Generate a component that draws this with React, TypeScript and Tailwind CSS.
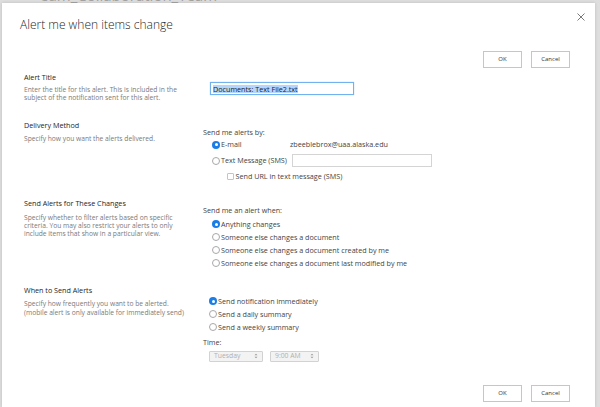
import React from "react";

function Radio({ checked }: { checked?: boolean }) {
  return checked ? (
    <span className="w-[8px] h-[8px] rounded-full bg-[#1a7ee6] flex items-center justify-center shrink-0">
      <span className="w-[3px] h-[3px] rounded-full bg-white" />
    </span>
  ) : (
    <span className="w-[8px] h-[8px] rounded-full border border-[#a8a8a8] bg-white shrink-0" />
  );
}

function Btn({ children }: { children: React.ReactNode }) {
  return (
    <div className="h-[17px] w-[39px] border border-[#c6c6c6] bg-white flex items-center justify-center text-[6px] text-[#333]">
      {children}
    </div>
  );
}

function Updown() {
  return (
    <svg width="4" height="6" viewBox="0 0 4 6" className="shrink-0">
      <path d="M0.5 2.3 L2 0.8 L3.5 2.3 Z" fill="#9a9a9a" />
      <path d="M0.5 3.7 L2 5.2 L3.5 3.7 Z" fill="#9a9a9a" />
    </svg>
  );
}

function Select({ w, text }: { w: string; text: string }) {
  return (
    <div className={`${w} h-[11px] border border-[#d2d2d2] bg-[#f3f3f3] rounded-[1px] flex items-center justify-between px-[4px] text-[6.8px] text-[#b0b0b0]`}>
      <span>{text}</span>
      <Updown />
    </div>
  );
}

export default function App() {
  return (
    <div className="w-[600px] h-[407px] bg-[#dedede] overflow-hidden flex flex-col font-['Segoe_UI','Open_Sans',sans-serif]">
      <div className="h-[3px] overflow-hidden pl-[40px] text-[#a3a3a3] text-[15px] leading-[15px] shrink-0">
        <div className="-mt-[12px]">eam_Collaboration_Team</div>
      </div>
      <div className="flex flex-1 min-h-0 pl-[2px] pr-[5px]">
        <div className="flex-1 bg-white flex flex-col shadow-[0_0_3px_rgba(0,0,0,0.15)]">
          {/* header */}
          <div className="flex justify-between items-start pl-[18px] pr-[10px]">
            <div className="mt-[14px] text-[12px] leading-[16px] text-[#262626] font-light">
              Alert me when items change
            </div>
            <svg width="8" height="8" viewBox="0 0 8 8" className="mt-[10px]">
              <path d="M0.5 0.5 L7.5 7.5 M7.5 0.5 L0.5 7.5" stroke="#6a6a6a" strokeWidth="0.9" />
            </svg>
          </div>
          {/* top buttons */}
          <div className="flex justify-end gap-[9px] pr-[25px] mt-[18px]">
            <Btn>OK</Btn>
            <Btn>Cancel</Btn>
          </div>

          {/* Section 1 */}
          <div className="flex pl-[22px] mt-[4.5px] h-[48px] shrink-0">
            <div className="w-[179px] whitespace-nowrap">
              <div className="text-[7.2px] leading-[9px] text-[#1e1e1e]">Alert Title</div>
              <div className="mt-[4px] text-[6.7px] leading-[8.6px] text-[#7a7a7a]">
                Enter the title for this alert. This is included in the
                <br />
                subject of the notification sent for this alert.
              </div>
            </div>
            <div className="pt-[9.5px] pl-[7px]">
              <div className="w-[144px] h-[13px] border border-[#72b2ee] shadow-[0_0_1px_#9cc9f3] flex items-center px-[2px]">
                <span className="bg-[#b4d5fe] text-[7.2px] leading-[8px] text-[#222]">Documents: Text File2.txt</span>
              </div>
            </div>
          </div>

          {/* Section 2 */}
          <div className="flex pl-[22px] h-[78px] shrink-0">
            <div className="w-[179px] whitespace-nowrap">
              <div className="text-[7.2px] leading-[9px] text-[#1e1e1e]">Delivery Method</div>
              <div className="mt-[5px] text-[6.7px] leading-[8.6px] text-[#7a7a7a]">
                Specify how you want the alerts delivered.
              </div>
            </div>
            <div className="pt-[7.7px] text-[7.2px] text-[#444] whitespace-nowrap">
              <div className="leading-[9px]">Send me alerts by:</div>
              <div className="mt-[1px] h-[13px] pl-[9px] flex items-center">
                <Radio checked />
                <span className="ml-[1px] w-[69px]">E-mail</span>
                <span>zbeeblebrox@uaa.alaska.edu</span>
              </div>
              <div className="mt-[3px] h-[13px] pl-[9px] flex items-center">
                <Radio />
                <span className="ml-[1px] w-[71px]">Text Message (SMS)</span>
                <span className="w-[140px] h-[13px] border border-[#d4d4d4]" />
              </div>
              <div className="mt-[3px] h-[13px] pl-[24px] flex items-center">
                <span className="w-[7px] h-[7px] border border-[#c4c4c4] rounded-[1px] shrink-0" />
                <span className="ml-[1.5px]">Send URL in text message (SMS)</span>
              </div>
            </div>
          </div>

          {/* Section 3 */}
          <div className="flex pl-[22px] h-[87px] shrink-0">
            <div className="w-[179px] whitespace-nowrap">
              <div className="text-[7.2px] leading-[9px] text-[#1e1e1e]">Send Alerts for These Changes</div>
              <div className="mt-[6px] text-[6.7px] leading-[8px] text-[#7a7a7a]">
                Specify whether to filter alerts based on specific
                <br />
                criteria. You may also restrict your alerts to only
                <br />
                include items that show in a particular view.
              </div>
            </div>
            <div className="pt-[7px] text-[7.2px] text-[#444] whitespace-nowrap">
              <div className="leading-[9px]">Send me an alert when:</div>
              <div className="mt-[3px] pl-[9px] flex flex-col">
                <div className="h-[13px] flex items-center">
                  <Radio checked />
                  <span className="ml-[1px]">Anything changes</span>
                </div>
                <div className="h-[13px] flex items-center">
                  <Radio />
                  <span className="ml-[1px]">Someone else changes a document</span>
                </div>
                <div className="h-[13px] flex items-center">
                  <Radio />
                  <span className="ml-[1px]">Someone else changes a document created by me</span>
                </div>
                <div className="h-[13px] flex items-center">
                  <Radio />
                  <span className="ml-[1px]">Someone else changes a document last modified by me</span>
                </div>
              </div>
            </div>
          </div>

          {/* Section 4 */}
          <div className="flex pl-[22px] shrink-0">
            <div className="w-[179px] whitespace-nowrap">
              <div className="text-[7.2px] leading-[9px] text-[#1e1e1e]">When to Send Alerts</div>
              <div className="mt-[4px] text-[6.7px] leading-[9px] text-[#7a7a7a]">
                Specify how frequently you want to be alerted.
                <br />
                (mobile alert is only available for immediately send)
              </div>
            </div>
            <div className="pt-[9px] text-[7.2px] text-[#444] whitespace-nowrap">
              <div className="pl-[6px] flex flex-col">
                <div className="h-[13px] flex items-center">
                  <Radio checked />
                  <span className="ml-[1px]">Send notification immediately</span>
                </div>
                <div className="h-[13px] flex items-center">
                  <Radio />
                  <span className="ml-[1px]">Send a daily summary</span>
                </div>
                <div className="h-[13px] flex items-center">
                  <Radio />
                  <span className="ml-[1px]">Send a weekly summary</span>
                </div>
              </div>
              <div className="mt-[4px] leading-[9px]">Time:</div>
              <div className="mt-[4px] pl-[6px] flex gap-[7px]">
                <Select w="w-[54px]" text="Tuesday" />
                <Select w="w-[49px]" text="9:00 AM" />
              </div>
            </div>
          </div>

          {/* bottom buttons */}
          <div className="mt-auto flex justify-end gap-[9px] pr-[25px] pb-[5px]">
            <Btn>OK</Btn>
            <Btn>Cancel</Btn>
          </div>
        </div>
      </div>
    </div>
  );
}
